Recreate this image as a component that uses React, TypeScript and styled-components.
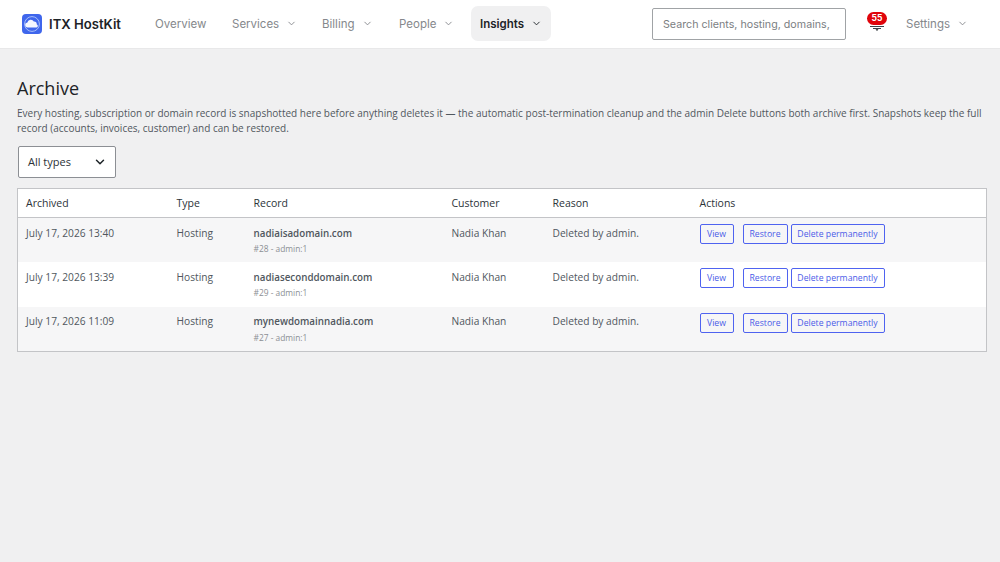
import React from 'react'
import styled, { createGlobalStyle } from 'styled-components'
import { ChevronDown } from 'lucide-react'

const GlobalStyle = createGlobalStyle`
  html, body {
    margin: 0;
    padding: 0;
    background: #f0f0f1;
  }
  * {
    box-sizing: border-box;
  }
`

const Page = styled.div`
  width: 1000px;
  height: 562px;
  overflow: hidden;
  background: #f0f0f1;
  font-family: 'Open Sans', 'Noto Sans', sans-serif;
  color: #3c434a;
`

const Header = styled.header`
  height: 49px;
  display: flex;
  align-items: center;
  padding: 0 22px;
  background: #fff;
  border-bottom: 1px solid #e8e8e9;
  font-family: Inter, sans-serif;
`

const Brand = styled.div`
  display: flex;
  align-items: center;
  gap: 7px;
  width: 121px;
  font-size: 13.1px;
  font-weight: 600;
  color: #1d2327;
  white-space: nowrap;
`

const Nav = styled.nav`
  display: flex;
  align-items: center;
`

const NavItem = styled.a<{ $active?: boolean; $width: number }>`
  display: flex;
  align-items: center;
  gap: 7px;
  width: ${(p) => p.$width}px;
  height: 35px;
  padding-left: ${(p) => (p.$active ? 9 : 12)}px;
  margin-top: -1px;
  border-radius: 7px;
  font-size: 11.5px;
  font-weight: ${(p) => (p.$active ? 600 : 400)};
  color: ${(p) => (p.$active ? '#1d2327' : '#85888c')};
  background: ${(p) => (p.$active ? '#f0f0f1' : 'transparent')};
  white-space: nowrap;
`

const Search = styled.input`
  width: 194px;
  height: 32px;
  margin-left: 101px;
  padding: 0 10px;
  border: 1px solid #a0a3a6;
  border-radius: 2px;
  background: #fff;
  font-family: Inter, sans-serif;
  font-size: 10.7px;
  color: #3c434a;
  outline: none;
  &::placeholder {
    color: #7b7e82;
    opacity: 1;
  }
`

const Bell = styled.div`
  position: relative;
  width: 20px;
  height: 20px;
  margin-left: 21px;
  margin-right: 7px;
`

const Badge = styled.span`
  position: absolute;
  top: -2px;
  left: 0;
  width: 20px;
  height: 13px;
  border-radius: 7px;
  background: #e0040b;
  color: #fff;
  font-size: 8.5px;
  font-weight: 700;
  line-height: 13px;
  text-align: center;
`

const Main = styled.main`
  padding: 28px 14px 0 17px;
`

const Title = styled.h1`
  margin: 0 0 6px;
  font-size: 18px;
  font-weight: 400;
  line-height: 23px;
  color: #1d2327;
`

const Intro = styled.p`
  margin: 0 0 10px;
  font-size: 10px;
  line-height: 15px;
  color: #50575e;
`

const Filter = styled.div`
  display: flex;
  align-items: center;
  justify-content: space-between;
  width: 98px;
  height: 32px;
  margin: 0 0 10px 1px;
  padding: 0 8px 1px 9px;
  border: 1px solid #8c8f94;
  border-radius: 2px;
  background: #fff;
  font-size: 11px;
  color: #2c3338;
`

const Table = styled.table`
  width: 969px;
  border-collapse: collapse;
  table-layout: fixed;
  border: 1px solid #c3c4c7;
  background: #fff;
  font-size: 10.2px;
`

const Th = styled.th<{ $width: number }>`
  width: ${(p) => p.$width}px;
  height: 29px;
  padding: 0 8px;
  border-bottom: 1px solid #c3c4c7;
  font-size: 10.5px;
  font-weight: 400;
  text-align: left;
  color: #2c3338;
`

const Row = styled.tr<{ $striped?: boolean }>`
  height: 44.7px;
  background: ${(p) => (p.$striped ? '#f6f6f7' : '#fff')};
`

const Td = styled.td`
  padding: 7.5px 8px 0;
  vertical-align: top;
  line-height: 14px;
  color: #50575e;
`

const RecordName = styled.div`
  margin-top: 1px;
  font-size: 9.8px;
  font-weight: 600;
  color: #50575e;
`

const RecordMeta = styled.div`
  margin-top: 1.5px;
  font-size: 8.4px;
  line-height: 13px;
  color: #8c8f94;
`

const Actions = styled.div`
  display: flex;
  margin-top: -1.5px;
`

const ActionButton = styled.button<{ $width: number; $after?: number }>`
  width: ${(p) => p.$width}px;
  height: 20px;
  margin-right: ${(p) => p.$after ?? 0}px;
  padding: 0;
  border: 1px solid #4f63f0;
  border-radius: 2px;
  background: transparent;
  font-family: 'Open Sans', sans-serif;
  font-size: 8.7px;
  color: #4a5ce8;
`

const NAV = [
  { label: 'Overview', width: 77 },
  { label: 'Services', width: 90, menu: true },
  { label: 'Billing', width: 77, menu: true },
  { label: 'People', width: 84, menu: true },
]

const ROWS = [
  { date: 'July 17, 2026 13:40', name: 'nadiaisadomain.com', meta: '#28 - admin:1' },
  { date: 'July 17, 2026 13:39', name: 'nadiaseconddomain.com', meta: '#29 - admin:1' },
  { date: 'July 17, 2026 11:09', name: 'mynewdomainnadia.com', meta: '#27 - admin:1' },
]

const Logo = () => (
  <svg width="20" height="20" viewBox="0 0 20 20">
    <rect width="20" height="20" rx="4" fill="#3f66ec" />
    <circle cx="10" cy="10" r="7.4" fill="none" stroke="#a9c0fa" strokeWidth="1" />
    <path
      d="M5.6 13.4a2.4 2.4 0 0 1-.2-4.8 3.4 3.4 0 0 1 6.4-1.1 2.9 2.9 0 0 1 3 3 1.5 1.5 0 0 1-.2 2.9z"
      fill="#f4f7ff"
    />
  </svg>
)

const BellIcon = () => (
  <svg width="20" height="20" viewBox="0 0 20 20">
    <rect x="3" y="12" width="14" height="1" fill="#3c434a" />
    <rect x="6" y="14" width="8" height="1" fill="#3c434a" />
    <path d="M8.5 15.2h3L10 17z" fill="#1d2327" />
  </svg>
)

const App = () => (
  <Page>
    <GlobalStyle />
    <Header>
      <Brand>
        <Logo />
        ITX HostKit
      </Brand>
      <Nav>
        {NAV.map((item) => (
          <NavItem key={item.label} $width={item.width}>
            {item.label}
            {item.menu && <ChevronDown size={11} color="#85888c" />}
          </NavItem>
        ))}
        <NavItem $active $width={80}>
          Insights
          <ChevronDown size={11} color="#1d2327" />
        </NavItem>
      </Nav>
      <Search placeholder="Search clients, hosting, domains," />
      <Bell>
        <Badge>55</Badge>
        <BellIcon />
      </Bell>
      <NavItem $width={80}>
        Settings
        <ChevronDown size={11} color="#85888c" />
      </NavItem>
    </Header>
    <Main>
      <Title>Archive</Title>
      <Intro>
        Every hosting, subscription or domain record is snapshotted here before anything deletes it — the
        automatic post-termination cleanup and the admin Delete buttons both archive first. Snapshots keep the
        full record (accounts, invoices, customer) and can be restored.
      </Intro>
      <Filter>
        All types
        <ChevronDown size={14} strokeWidth={2.5} color="#1d2327" />
      </Filter>
      <Table>
        <thead>
          <tr>
            <Th $width={151}>Archived</Th>
            <Th $width={77}>Type</Th>
            <Th $width={198}>Record</Th>
            <Th $width={101}>Customer</Th>
            <Th $width={147}>Reason</Th>
            <Th $width={295}>Actions</Th>
          </tr>
        </thead>
        <tbody>
          {ROWS.map((row, i) => (
            <Row key={row.name} $striped={i % 2 === 0}>
              <Td>{row.date}</Td>
              <Td>Hosting</Td>
              <Td>
                <RecordName>{row.name}</RecordName>
                <RecordMeta>{row.meta}</RecordMeta>
              </Td>
              <Td>Nadia Khan</Td>
              <Td>Deleted by admin.</Td>
              <Td>
                <Actions>
                  <ActionButton $width={34} $after={9}>View</ActionButton>
                  <ActionButton $width={45} $after={3}>Restore</ActionButton>
                  <ActionButton $width={94}>Delete permanently</ActionButton>
                </Actions>
              </Td>
            </Row>
          ))}
        </tbody>
      </Table>
    </Main>
  </Page>
)

export default App
